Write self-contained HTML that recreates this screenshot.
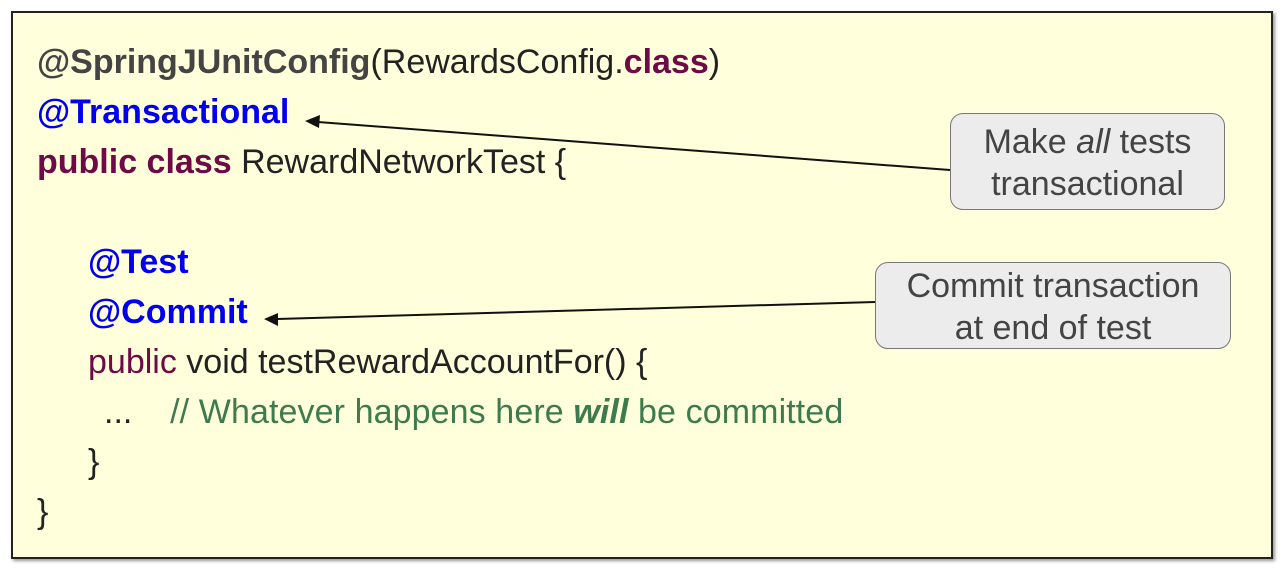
<!DOCTYPE html>
<html><head><style>
body{margin:0;width:1285px;height:570px;background:#fff;position:relative;overflow:hidden;font-family:"Liberation Sans",sans-serif}
.main{position:absolute;left:11px;top:11px;width:1258px;height:544px;border:2px solid #222;background:#ffffdc;box-shadow:2px 2px 3px #999}
.l{position:absolute;font-size:34px;white-space:pre;color:#222;line-height:36px}
.b{font-weight:bold}.bl{color:#0000ee;font-weight:bold}.m{color:#6e0a46}.g{color:#3d7a4e}
.call{position:absolute;border:1.5px solid #777;border-radius:13px;background:#ececec;color:#444;font-size:34px;text-align:center;line-height:42px;box-sizing:border-box}
</style></head><body>
<div class="main"></div>
<div class="l" style="left:37px;top:44px"><b style="color:#444">@SpringJUnitConfig</b>(RewardsConfig.<span class="b m">class</span>)</div>
<div class="l bl" style="left:37px;top:94px">@Transactional</div>
<div class="l" style="left:37px;top:144px"><span class="b m">public class</span> RewardNetworkTest {</div>
<div class="l bl" style="left:88px;top:244px">@Test</div>
<div class="l bl" style="left:88px;top:294px">@Commit</div>
<div class="l" style="left:88px;top:344px"><span class="m">public</span> void testRewardAccountFor() {</div>
<div class="l" style="left:104px;top:394px">...    <span class="g" style="letter-spacing:0.1px">// Whatever happens here <b><i>will</i></b> be committed</span></div>
<div class="l" style="left:88px;top:444px">}</div>
<div class="l" style="left:37px;top:494px">}</div>
<svg width="1285" height="570" style="position:absolute;left:0;top:0">
<line x1="950" y1="170" x2="318" y2="122" stroke="#111" stroke-width="2"/>
<polygon points="305,121 320,115 319,128" fill="#111"/>
<line x1="875" y1="302" x2="277" y2="319" stroke="#111" stroke-width="2"/>
<polygon points="264,319 278,313 278,326" fill="#111"/>
</svg>
<div class="call" style="left:950px;top:113px;width:275px;height:97px;padding-top:7px">Make <i>all</i> tests<br>transactional</div>
<div class="call" style="left:875px;top:262px;width:356px;height:87px;padding-top:2px">Commit transaction<br>at end of test</div>
</body></html>
